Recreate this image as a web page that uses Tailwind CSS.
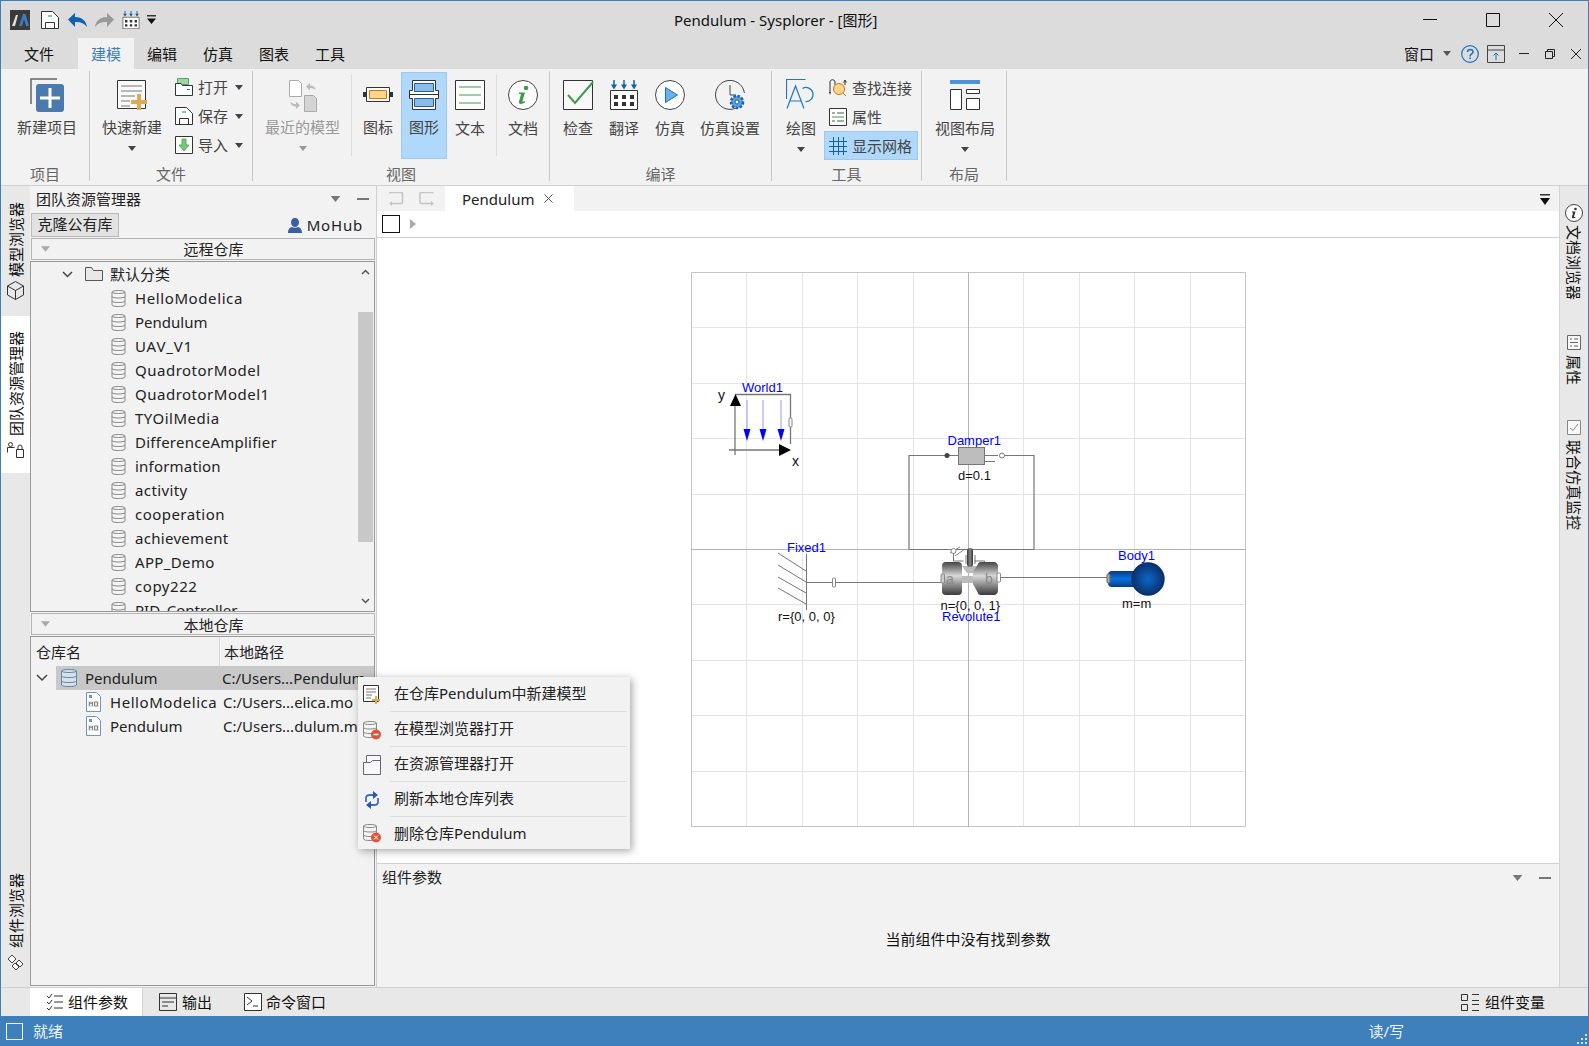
<!DOCTYPE html>
<html lang="zh">
<head>
  <meta charset="UTF-8" />
  <title>Pendulum - Sysplorer - [图形]</title>
  <script src="https://cdn.jsdelivr.net/npm/@tailwindcss/browser@4"></script>
</head>
<body class="w-[1589px] h-[1046px] overflow-hidden relative flex flex-col border-x border-t border-[#3d80bc] bg-[#f2f2f2] text-[15px] text-[#222] leading-[20px] font-['Noto_Sans','Noto_Sans_CJK_SC',sans-serif]">

  <!-- shared icons -->
  <svg class="absolute w-0 h-0">
    <symbol id="tri" viewBox="0 0 8 5"><path d="M0 0h8L4 5z" /></symbol>
    <symbol id="save" viewBox="0 0 18 18"><path d="M.5.500h11l6 6v11H.5z" fill="#fff" stroke="#333" /><path d="M7 5h4" stroke="#1a73c0" fill="none" /><path d="M4.500 17.500v-6h9v6" fill="none" stroke="#333" /></symbol>
    <symbol id="compile" viewBox="0 0 28 30"><path d="M.5 10.500h27v19H.5z" fill="#fff" stroke="#333" /><path d="M4 0v6M14 0v6M24 0v6" stroke="#0f62a8" stroke-width="1.500" /><path d="M1 4.500l3 5 3-5zM11 4.500l3 5 3-5zM21 4.500l3 5 3-5z" fill="#0f62a8" /><path d="M4 15h4v4H4zM12 15h4v4h-4zM20 15h4v4h-4zM4 22h4v4H4zM12 22h4v4h-4zM20 22h4v4h-4z" fill="#333" /></symbol>
    <symbol id="db" viewBox="0 0 14 19"><path d="M.5 3C.5 1 13.500 1 13.500 3v13c0 2-13 2-13 0z" fill="#f4f4f4" stroke="#888" /><path d="M.5 3c0 2 13 2 13 0M.5 7.500c0 2 13 2 13 0M.5 12c0 2 13 2 13 0" fill="none" stroke="#888" /></symbol>
    <symbol id="dbblue" viewBox="0 0 16 20"><path d="M.5 3C.5 1 15.500 1 15.500 3v14c0 2-15 2-15 0z" fill="#d8e0ea" stroke="#5f86ad" /><path d="M.5 3c0 2 15 2 15 0M.5 8c0 2 15 2 15 0M.5 13c0 2 15 2 15 0" fill="none" stroke="#5f86ad" /></symbol>
    <symbol id="mofile" viewBox="0 0 15 20"><path d="M.5.500h10l4 4v15H.5z" fill="#fff" stroke="#6f94c4" /><path d="M3 3h3v3H3z" fill="#6f94c4" /><path d="M2 9h11v6H2z" fill="#e4e4e4" /><path d="M3.500 14v-4l1.500 2 1.500-2v4M8.500 10h3v4h-3z" fill="none" stroke="#777" stroke-width=".8" /></symbol>
  </svg>

  <!-- title bar -->
  <div class="h-[37px] shrink-0 bg-[#dcdcdc] flex items-center">
    <svg class="ml-[9px] w-[20px] h-[20px]" viewBox="0 0 20 20"><rect width="20" height="20" fill="#3a3a3a" /><path d="M2 16 6 5h2L5 16z" fill="#ddd" /><path d="M9 16 13 4h2.500L19 16h-3l-2-7-2 7z" fill="#3d7cc0" /></svg>
    <svg class="ml-[11px] w-[18px] h-[18px]"><use href="#save" /></svg>
    <svg class="ml-[9px] w-[19px] h-[14px]" viewBox="0 0 19 14"><path d="M0 6.500 7 0v4c6 0 11 3 12 10-3-4-7-5.500-12-5v5z" fill="#0f62b0" /></svg>
    <svg class="ml-[8px] w-[19px] h-[14px]" viewBox="0 0 19 14"><path d="M19 6.500 12 0v4C6 4 1 7 0 14c3-4 7-5.500 12-5v5z" fill="#9a9a9a" /></svg>
    <svg class="ml-[8px] w-[18px] h-[18px]"><use href="#compile" /></svg>
    <svg class="ml-[7px] w-[9px] h-[9px]" viewBox="0 0 9 9"><path d="M0 0h9v1.500H0z" fill="#333" /><path d="M0 3.500h9L4.500 9z" fill="#111" /></svg>
    <span class="ml-[518px] text-[#111]">Pendulum - Sysplorer - [图形]</span>
    <div class="ml-auto flex items-center">
      <svg class="w-[14px] h-[14px]" viewBox="0 0 14 14"><path d="M0 6.500h14" stroke="#111" /></svg>
      <svg class="ml-[49px] w-[14px] h-[14px]" viewBox="0 0 14 14"><path d="M.5.500h13v13H.5z" fill="none" stroke="#111" /></svg>
      <svg class="ml-[49px] mr-[25px] w-[14px] h-[14px]" viewBox="0 0 14 14"><path d="M0 0l14 14M14 0 0 14" stroke="#111" /></svg>
    </div>
  </div>

  <!-- ribbon tabs -->
  <div class="h-[31px] shrink-0 bg-[#dcdcdc] flex items-stretch pl-[10px] text-[#111]">
    <div class="w-[56px] flex items-center justify-center">文件</div>
    <div class="ml-[11px] w-[56px] flex items-center justify-center bg-[#f2f2f2] text-[#3d80bc]">建模</div>
    <div class="w-[56px] flex items-center justify-center">编辑</div>
    <div class="w-[56px] flex items-center justify-center">仿真</div>
    <div class="w-[56px] flex items-center justify-center">图表</div>
    <div class="w-[56px] flex items-center justify-center">工具</div>
    <div class="ml-auto flex items-center">
      <span>窗口</span>
      <svg class="ml-[9px] w-[8px] h-[5px] fill-[#555]"><use href="#tri" /></svg>
      <svg class="ml-[10px] w-[18px] h-[18px]" viewBox="0 0 18 18"><circle cx="9" cy="9" r="8.300" fill="none" stroke="#1a73c0" stroke-width="1.200" /><path d="M6.500 7c0-3.500 5.500-3.500 5.500 0 0 2-3 2-3 4.500" fill="none" stroke="#1a73c0" stroke-width="1.500" /><path d="M8.200 12.500h1.600v1.600H8.200z" fill="#1a73c0" /></svg>
      <svg class="ml-[8px] w-[18px] h-[18px]" viewBox="0 0 18 18"><path d="M.5.500h17v17H.5zM.5 5h17" fill="none" stroke="#444" /><path d="M9 15V8M6.500 10.500 9 8l2.500 2.500" fill="none" stroke="#1a73c0" /></svg>
      <svg class="ml-[14px] w-[10px] h-[10px]" viewBox="0 0 10 10"><path d="M0 4.500h10" stroke="#222" /></svg>
      <svg class="ml-[16px] w-[10px] h-[10px]" viewBox="0 0 10 10"><path d="M.5 2.500h7v7h-7zM2.500 2.500v-2h7v7h-2" fill="none" stroke="#222" /></svg>
      <svg class="ml-[16px] mr-[7px] w-[10px] h-[10px]" viewBox="0 0 10 10"><path d="M0 0l10 10M10 0 0 10" stroke="#222" /></svg>
    </div>
  </div>

  <!-- ribbon -->
  <div class="h-[117px] shrink-0 flex border-b border-[#d0d0d0] text-[#444]">

    <div class="w-[89px] mt-[2px] h-[110px] border-r border-[#c8c8c8] flex flex-col">
      <div class="flex-1 flex pl-[16px]">
        <div class="w-[60px] flex flex-col items-center pt-[7px]">
          <svg class="w-[35px] h-[34px]" viewBox="0 0 35 34"><path d="M1 26V1h26" fill="none" stroke="#666" stroke-width="1.500" /><rect x="6" y="6" width="28" height="28" rx="3" fill="#4a7aae" /><path d="M10 18.500h20v3H10zM18.500 10h3v20h-3z" fill="#fff" /></svg>
          <span class="mt-[5px]">新建项目</span>
        </div>
      </div>
      <div class="h-[16px] leading-[16px] pt-[1px] text-center text-[#666]">项目</div>
    </div>

    <div class="w-[163px] mt-[2px] h-[110px] border-r border-[#c8c8c8] flex flex-col">
      <div class="flex-1 flex pl-[12px]">
        <div class="w-[60px] flex flex-col items-center pt-[9px]">
          <svg class="w-[31px] h-[30px]" viewBox="0 0 31 30"><path d="M.5.500h28v28H.5z" fill="#fafafa" stroke="#333" /><path d="M4 6h21M4 11h21M4 16h14M4 21h9M4 26h9" stroke="#777" /><path d="M20 14h4v6h6v4h-6v6h-4v-6h-6v-4h6z" fill="#e0aa55" /></svg>
          <span class="mt-[7px]">快速新建</span>
          <svg class="mt-[9px] w-[8px] h-[5px] fill-[#444]"><use href="#tri" /></svg>
        </div>
        <div class="ml-[13px] pt-[7px] flex flex-col gap-[11px]">
          <div class="h-[18px] flex items-center">
            <svg class="w-[18px] h-[18px]" viewBox="0 0 18 18"><path d="M2.500.500h11v6h-11z" fill="#9fd6a5" stroke="#5aa56a" /><path d="M.5 5.500H6l1.500 2h10v10H.5z" fill="#fff" stroke="#333" /><path d="M12 11.500h3" stroke="#1a73c0" /></svg>
            <span class="ml-[5px]">打开</span>
            <svg class="ml-[7px] w-[8px] h-[5px] fill-[#444]"><use href="#tri" /></svg>
          </div>
          <div class="h-[18px] flex items-center">
            <svg class="w-[18px] h-[18px]"><use href="#save" /></svg>
            <span class="ml-[5px]">保存</span>
            <svg class="ml-[7px] w-[8px] h-[5px] fill-[#444]"><use href="#tri" /></svg>
          </div>
          <div class="h-[18px] flex items-center">
            <svg class="w-[18px] h-[18px]" viewBox="0 0 18 18"><path d="M.5.500h17v17H.5z" fill="#fff" stroke="#333" /><path d="M7 3h4v6h3l-5 6-5-6h3z" fill="#7ac77f" stroke="#3f9a4c" stroke-width=".8" /></svg>
            <span class="ml-[5px]">导入</span>
            <svg class="ml-[7px] w-[8px] h-[5px] fill-[#444]"><use href="#tri" /></svg>
          </div>
        </div>
      </div>
      <div class="h-[16px] leading-[16px] pt-[1px] text-center text-[#666]">文件</div>
    </div>

    <div class="w-[297px] mt-[2px] h-[110px] border-r border-[#c8c8c8] flex flex-col">
      <div class="flex-1 flex pl-[12px]">
        <div class="w-[75px] flex flex-col items-center pt-[9px] text-[#999]">
          <svg class="w-[28px] h-[32px]" viewBox="0 0 28 32"><path d="M.5.500h9l3 3v13H.5z" fill="#fff" stroke="#aaa" /><path d="M15.500 15.500h9l3 3v13h-12z" fill="#d4d4d4" stroke="#aaa" /><path d="M17 6.500 21 3v2.500c3 0 5 1.500 6 4.500-2-1.500-4-2-6-2v2.500zM11 25.500 7 29v-2.500c-3 0-5-1.500-6-4.500 2 1.500 4 2 6 2v-2.500z" fill="#bbb" /></svg>
          <span class="mt-[5px]">最近的模型</span>
          <svg class="mt-[9px] w-[8px] h-[5px] fill-[#999]"><use href="#tri" /></svg>
        </div>
        <div class="ml-[11px] mt-[4px] w-[1px] h-[81px] bg-[#dcdcdc]"></div>
        <div class="ml-[11px] w-[30px] flex flex-col items-center pt-[16px]">
          <svg class="w-[30px] h-[15px]" viewBox="0 0 30 15"><path d="M3.500.500h23v14h-23z" fill="#fff" stroke="#333" /><path d="M0 5h3v5H0zM27 5h3v5h-3z" fill="#333" /><path d="M6.500 3.500h17v8h-17z" fill="#fbd68c" stroke="#d9730d" /></svg>
          <span class="mt-[15px]">图标</span>
        </div>
        <div class="ml-[8px] mt-[1px] w-[46px] h-[87px] bg-[#afd8fa] border border-[#9fc9ec] flex flex-col items-center pt-[7px]">
          <svg class="w-[30px] h-[30px]" viewBox="0 0 30 30"><path d="M3.500.500h23v10h3v8h-3v11h-23v-11h-3v-8h3z" fill="#fff" stroke="#333" /><path d="M.5 14.500h29" stroke="#333" /><path d="M5.500 3.500h19v8h-19zM5.500 18.500h19v8h-19z" fill="#8bbde8" stroke="#1a63a8" /></svg>
          <span class="mt-[7px]">图形</span>
        </div>
        <div class="ml-[8px] w-[30px] flex flex-col items-center pt-[9px]">
          <svg class="w-[30px] h-[30px]" viewBox="0 0 30 30"><path d="M.5.500h29v29H.5z" fill="#fff" stroke="#333" /><path d="M4 7h22M4 15h22M4 23h22" stroke="#3f9a4c" /></svg>
          <span class="mt-[8px]">文本</span>
        </div>
        <div class="ml-[11px] mt-[4px] w-[1px] h-[81px] bg-[#dcdcdc]"></div>
        <div class="ml-[11px] w-[30px] flex flex-col items-center pt-[9px]">
          <svg class="w-[30px] h-[30px]" viewBox="0 0 30 30"><circle cx="15" cy="15" r="14.500" fill="#fff" stroke="#444" /><circle cx="18" cy="8" r="2.300" fill="#3f9a4c" /><path d="M11 12.500h6L14.500 21c-.3 1 1 1 2.500 0v1.500c-3 2-7 2-6-1l2-7.500h-2z" fill="#3f9a4c" /></svg>
          <span class="mt-[8px]">文档</span>
        </div>
      </div>
      <div class="h-[16px] leading-[16px] pt-[1px] text-center text-[#666]">视图</div>
    </div>

    <div class="w-[222px] mt-[2px] h-[110px] border-r border-[#c8c8c8] flex flex-col">
      <div class="flex-1 flex pl-[13px]">
        <div class="w-[30px] flex flex-col items-center pt-[9px]">
          <svg class="w-[31px] h-[30px] shrink-0" viewBox="0 0 31 30"><path d="M.5.500h29v29H.5z" fill="#f8f8f8" stroke="#333" /><path d="M5 15l7 8L30 2" fill="none" stroke="#3f9a4c" stroke-width="2" /></svg>
          <span class="mt-[8px]">检查</span>
        </div>
        <div class="ml-[16px] w-[30px] flex flex-col items-center pt-[9px]">
          <svg class="w-[28px] h-[30px]"><use href="#compile" /></svg>
          <span class="mt-[8px]">翻译</span>
        </div>
        <div class="ml-[16px] w-[30px] flex flex-col items-center pt-[9px]">
          <svg class="w-[30px] h-[30px]" viewBox="0 0 30 30"><circle cx="15" cy="15" r="14.500" fill="#fff" stroke="#444" /><path d="M10.500 7.500 22.500 15l-12 7.500z" fill="#6db0ea" stroke="#1a73c0" /></svg>
          <span class="mt-[8px]">仿真</span>
        </div>
        <div class="ml-[15px] w-[60px] flex flex-col items-center pt-[9px]">
          <svg class="w-[30px] h-[30px]" viewBox="0 0 30 30"><path d="M23 27A14.500 14.500 0 1 1 29.400 13" fill="none" stroke="#444" /><path d="M15 5v10h6" fill="none" stroke="#444" /><circle cx="22" cy="22" r="6" fill="#5b9fdc" stroke="#1a63a8" stroke-width="2.500" stroke-dasharray="2.500 1.500" /><circle cx="22" cy="22" r="2" fill="#fff" stroke="#1a63a8" /></svg>
          <span class="mt-[8px]">仿真设置</span>
        </div>
      </div>
      <div class="h-[16px] leading-[16px] pt-[1px] text-center text-[#666]">编译</div>
    </div>

    <div class="w-[150px] mt-[2px] h-[110px] border-r border-[#c8c8c8] flex flex-col">
      <div class="flex-1 flex pl-[14px]">
        <div class="w-[30px] flex flex-col items-center pt-[8px]">
          <svg class="w-[30px] h-[30px] shrink-0" viewBox="0 0 30 30"><path d="M.5 20V.500h19M1 29.500 9.500 7l8.500 22.500M4 22h11" fill="none" stroke="#1f78bd" stroke-width="1.200" /><path d="M16.500 9.500a7 7 0 1 1 3 13" fill="none" stroke="#1f78bd" stroke-width="1.200" /></svg>
          <span class="mt-[9px]">绘图</span>
          <svg class="mt-[9px] w-[8px] h-[5px] fill-[#444]"><use href="#tri" /></svg>
        </div>
        <div class="ml-[8px] mt-[2px] w-[94px] flex flex-col">
          <div class="h-[29px] pl-[5px] flex items-center">
            <svg class="w-[19px] h-[18px] shrink-0" viewBox="0 0 19 18"><path d="M1 14V3c0-3 5-3 5 0v3" fill="none" stroke="#333" /><path d="M0 13h2l-1 3z" fill="#333" /><circle cx="10" cy="10" r="5.500" fill="#fbd68c" stroke="#d9730d" /><path d="M14 14l3 3" stroke="#d9730d" /><path d="M16 6V2M14.500 3.500 16 1l1.500 2.500" fill="none" stroke="#333" /></svg>
            <span class="ml-[4px] pt-[1px] whitespace-nowrap">查找连接</span>
          </div>
          <div class="h-[29px] pl-[5px] flex items-center">
            <svg class="w-[18px] h-[18px] shrink-0" viewBox="0 0 18 18"><path d="M.5.500h17v17H.5z" fill="#fff" stroke="#333" /><path d="M3 5h3M8 5h7M3 13h3M8 13h7" stroke="#555" /><path d="M3 9h12" stroke="#3f9a4c" /></svg>
            <span class="ml-[5px] pt-[1px]">属性</span>
          </div>
          <div class="h-[29px] pl-[4px] flex items-center bg-[#afd8fa] border border-[#9fc9ec]">
            <svg class="w-[18px] h-[18px] shrink-0" viewBox="0 0 18 18"><path d="M4.500 0v18M9.500 0v18M14.500 0v18M0 4.500h18M0 9.500h18M0 14.500h18" stroke="#0f62a8" /></svg>
            <span class="ml-[5px] whitespace-nowrap">显示网格</span>
          </div>
        </div>
      </div>
      <div class="h-[16px] leading-[16px] pt-[1px] text-center text-[#666]">工具</div>
    </div>

    <div class="w-[85px] mt-[2px] h-[110px] border-r border-[#c8c8c8] flex flex-col">
      <div class="flex-1 flex pl-[13px]">
        <div class="w-[60px] flex flex-col items-center pt-[9px]">
          <svg class="w-[30px] h-[30px]" viewBox="0 0 30 30"><path d="M0 0h30v4H0z" fill="#4b94d6" /><path d="M.5 9.500h11v20H.5zM16.500 9.500h13v4h-13zM16.500 18.500h13v11h-13z" fill="#fff" stroke="#333" /></svg>
          <span class="mt-[8px]">视图布局</span>
          <svg class="mt-[9px] w-[8px] h-[5px] fill-[#444]"><use href="#tri" /></svg>
        </div>
      </div>
      <div class="h-[16px] leading-[16px] pt-[1px] text-center text-[#666]">布局</div>
    </div>
  </div>

  <!-- main row -->
  <div class="flex flex-1 min-h-0">

    <!-- left rail -->
    <div class="w-[29px] shrink-0 bg-[#e8e8e8] flex flex-col text-[#111]">
      <div class="h-[130px] pt-[16px] flex flex-col items-center">
        <span class="[writing-mode:vertical-rl] [text-orientation:sideways] rotate-180">模型浏览器</span>
        <svg class="mt-[4px] w-[17px] h-[19px]" viewBox="0 0 17 19"><path d="M8.500.500l8 4.500v9l-8 4.500-8-4.500V5zM.5 5l8 4.500L16.500 5M8.500 9.500v9" fill="none" stroke="#333" /></svg>
      </div>
      <div class="h-[157px] pt-[15px] bg-white flex flex-col items-center">
        <span class="[writing-mode:vertical-rl] [text-orientation:sideways] rotate-180">团队资源管理器</span>
        <svg class="mt-[6px] w-[17px] h-[16px]" viewBox="0 0 17 16"><path d="M7.500 5.500h-7v5M1.500 2.500a2 2 0 1 1 4 0 2 2 0 1 1-4 0" fill="none" stroke="#333" /><path d="M9.500 7.500h7v8h-7zM11 7.500V5a2 2 0 0 1 4 0v2.500" fill="none" stroke="#333" /></svg>
      </div>
      <div class="mt-auto pb-[16px] flex flex-col items-center">
        <span class="[writing-mode:vertical-rl] [text-orientation:sideways] rotate-180">组件浏览器</span>
        <svg class="mt-[6px] w-[17px] h-[17px]" viewBox="0 0 17 17"><path d="M1 5l4-4 4 4-4 4zM9 9l3-3 4 4-3 3zM5 12l3-3 4 4-3 3z" fill="#fff" stroke="#444" /></svg>
      </div>
    </div>

    <!-- team resource panel -->
    <div class="w-[347px] shrink-0 flex flex-col border-r border-[#cfcfcf]">
      <div class="h-[26px] shrink-0 pl-[6px] pr-[7px] flex items-center text-[#222]">
        <span>团队资源管理器</span>
        <svg class="ml-auto w-[11px] h-[6px] fill-[#777]"><use href="#tri" /></svg>
        <span class="ml-[16px] w-[12px] h-[2px] bg-[#777]"></span>
      </div>
      <div class="h-[24px] mt-[1px] shrink-0 pl-[1px] pr-[13px] flex items-center">
        <div class="w-[88px] h-[24px] pb-[2px] bg-[#e2e2e2] border border-[#bbb] flex items-center justify-center whitespace-nowrap">克隆公有库</div>
        <svg class="ml-auto w-[14px] h-[15px]" viewBox="0 0 14 15"><path d="M7 0c2.500 0 4 2 4 4.500S9 9 7 9 3 7 3 4.500 4.500 0 7 0zM0 15c0-4 2-5.500 4-6 1.500 1 4.500 1 6 0 2 .5 4 2 4 6z" fill="#3a5da8" /></svg>
        <span class="ml-[5px] text-[#222] tracking-[0.8px]">MoHub</span>
      </div>
      <div class="h-[22px] mt-[1px] shrink-0 ml-[1px] w-[344px] border border-[#b4b4b4] flex items-center">
        <svg class="ml-[9px] w-[9px] h-[6px] fill-[#aaa] shrink-0"><use href="#tri" /></svg>
        <span class="flex-1 text-center pl-[3px]">远程仓库</span>
      </div>

      <div class="h-[351px] mt-[1px] shrink-0 w-[345px] border border-[#999] flex overflow-hidden">
        <div class="flex-1 overflow-hidden text-[#222]">
          <div class="h-[24px] pl-[31px] flex items-center">
            <svg class="w-[11px] h-[7px]" viewBox="0 0 11 7"><path d="M1 1l4.500 4.500L10 1" fill="none" stroke="#444" stroke-width="1.500" /></svg>
            <svg class="ml-[12px] w-[18px] h-[14px]" viewBox="0 0 18 14"><path d="M.5 13.500V.500h6l2 3h9v10z" fill="#e8e8e8" stroke="#555" /></svg>
            <span class="ml-[7px]">默认分类</span>
          </div>
          <div class="h-[24px] pl-[80px] flex items-center"><svg class="w-[15px] h-[19px] shrink-0"><use href="#db" /></svg><span class="ml-[9px] tracking-[0.6px]">HelloModelica</span></div>
          <div class="h-[24px] pl-[80px] flex items-center"><svg class="w-[15px] h-[19px] shrink-0"><use href="#db" /></svg><span class="ml-[9px]">Pendulum</span></div>
          <div class="h-[24px] pl-[80px] flex items-center"><svg class="w-[15px] h-[19px] shrink-0"><use href="#db" /></svg><span class="ml-[9px] tracking-[0.8px]">UAV_V1</span></div>
          <div class="h-[24px] pl-[80px] flex items-center"><svg class="w-[15px] h-[19px] shrink-0"><use href="#db" /></svg><span class="ml-[9px] tracking-[0.5px]">QuadrotorModel</span></div>
          <div class="h-[24px] pl-[80px] flex items-center"><svg class="w-[15px] h-[19px] shrink-0"><use href="#db" /></svg><span class="ml-[9px] tracking-[0.5px]">QuadrotorModel1</span></div>
          <div class="h-[24px] pl-[80px] flex items-center"><svg class="w-[15px] h-[19px] shrink-0"><use href="#db" /></svg><span class="ml-[9px] tracking-[0.5px]">TYOilMedia</span></div>
          <div class="h-[24px] pl-[80px] flex items-center"><svg class="w-[15px] h-[19px] shrink-0"><use href="#db" /></svg><span class="ml-[9px] tracking-[0.25px]">DifferenceAmplifier</span></div>
          <div class="h-[24px] pl-[80px] flex items-center"><svg class="w-[15px] h-[19px] shrink-0"><use href="#db" /></svg><span class="ml-[9px] tracking-[0.2px]">information</span></div>
          <div class="h-[24px] pl-[80px] flex items-center"><svg class="w-[15px] h-[19px] shrink-0"><use href="#db" /></svg><span class="ml-[9px] tracking-[0.4px]">activity</span></div>
          <div class="h-[24px] pl-[80px] flex items-center"><svg class="w-[15px] h-[19px] shrink-0"><use href="#db" /></svg><span class="ml-[9px] tracking-[0.45px]">cooperation</span></div>
          <div class="h-[24px] pl-[80px] flex items-center"><svg class="w-[15px] h-[19px] shrink-0"><use href="#db" /></svg><span class="ml-[9px] tracking-[0.3px]">achievement</span></div>
          <div class="h-[24px] pl-[80px] flex items-center"><svg class="w-[15px] h-[19px] shrink-0"><use href="#db" /></svg><span class="ml-[9px] tracking-[0.35px]">APP_Demo</span></div>
          <div class="h-[24px] pl-[80px] flex items-center"><svg class="w-[15px] h-[19px] shrink-0"><use href="#db" /></svg><span class="ml-[9px] tracking-[0.55px]">copy222</span></div>
          <div class="h-[24px] pl-[80px] flex items-center"><svg class="w-[15px] h-[19px] shrink-0"><use href="#db" /></svg><span class="ml-[9px]">PID_Controller</span></div>
        </div>
        <div class="w-[17px] shrink-0 flex flex-col items-center">
          <svg class="mt-[7px] w-[9px] h-[6px]" viewBox="0 0 9 6"><path d="M1 5l3.500-3.500L8 5" fill="none" stroke="#555" stroke-width="1.500" /></svg>
          <div class="mt-[37px] w-[15px] h-[230px] bg-[#c8c8c8]"></div>
          <svg class="mt-auto mb-[7px] w-[9px] h-[6px]" viewBox="0 0 9 6"><path d="M1 1l3.500 3.500L8 1" fill="none" stroke="#555" stroke-width="1.500" /></svg>
        </div>
      </div>

      <div class="h-[22px] mt-[1px] shrink-0 ml-[1px] w-[344px] border border-[#b4b4b4] flex items-center">
        <svg class="ml-[9px] w-[9px] h-[6px] fill-[#aaa] shrink-0"><use href="#tri" /></svg>
        <span class="flex-1 text-center pl-[3px] pt-[1px]">本地仓库</span>
      </div>

      <div class="flex-1 mt-[1px] mb-[1px] w-[345px] border border-[#999] flex flex-col text-[#222] overflow-hidden">
        <div class="h-[29px] shrink-0 flex items-center">
          <div class="w-[189px] pl-[5px] border-r border-[#d8d8d8] h-full flex items-center">仓库名</div>
          <div class="pl-[4px]">本地路径</div>
        </div>
        <div class="h-[24px] shrink-0 flex items-center">
          <div class="w-[25px] pl-[5px] shrink-0"><svg class="w-[12px] h-[8px]" viewBox="0 0 12 8"><path d="M1 1l5 5 5-5" fill="none" stroke="#444" stroke-width="1.500" /></svg></div>
          <div class="flex-1 h-full bg-[#c8c8c8] flex items-center min-w-0">
            <svg class="ml-[5px] w-[16px] h-[20px] shrink-0"><use href="#dbblue" /></svg>
            <span class="ml-[8px] w-[137px] shrink-0">Pendulum</span>
            <span class="whitespace-nowrap">C:/Users...Pendulum</span>
          </div>
        </div>
        <div class="h-[24px] shrink-0 flex items-center pl-[55px]">
          <svg class="w-[15px] h-[20px] shrink-0"><use href="#mofile" /></svg>
          <span class="ml-[9px] w-[113px] shrink-0 whitespace-nowrap overflow-hidden tracking-[0.55px]">HelloModelica</span>
          <span class="whitespace-nowrap">C:/Users...elica.mo</span>
        </div>
        <div class="h-[24px] shrink-0 flex items-center pl-[55px]">
          <svg class="w-[15px] h-[20px] shrink-0"><use href="#mofile" /></svg>
          <span class="ml-[9px] w-[113px] shrink-0">Pendulum</span>
          <span class="whitespace-nowrap">C:/Users...dulum.mo</span>
        </div>
      </div>
    </div>

    <!-- editor -->
    <div class="flex-1 min-w-0 flex flex-col">
      <div class="h-[25px] shrink-0 bg-[#f2f2f2] flex items-stretch">
        <svg class="ml-[12px] mt-[6px] w-[15px] h-[14px]" viewBox="0 0 15 14"><path d="M.5 1.500a1 1 0 0 1 1-1h11a1 1 0 0 1 1 1v9a1 1 0 0 1-1 1H2" fill="none" stroke="#c4c4c4" stroke-width="1.500" /><path d="M0 11.500 3 9v5z" fill="#c4c4c4" /></svg>
        <svg class="ml-[15px] mt-[6px] w-[15px] h-[14px]" viewBox="0 0 15 14"><path d="M14 1.500a1 1 0 0 0-1-1H2a1 1 0 0 0-1 1v9a1 1 0 0 0 1 1h11" fill="none" stroke="#c4c4c4" stroke-width="1.500" /><path d="M15 11.500 12 9v5z" fill="#c4c4c4" /></svg>
        <div class="ml-[11px] w-[129px] bg-white flex items-center pl-[17px] text-[#222]">
          <span>Pendulum</span>
          <svg class="ml-[10px] w-[9px] h-[9px]" viewBox="0 0 9 9"><path d="M.5.500l8 8M8.500.500l-8 8" stroke="#555" /></svg>
        </div>
        <svg class="ml-auto mr-[9px] mt-[8px] w-[10px] h-[11px]" viewBox="0 0 10 11"><path d="M0 0h10v1.500H0z" fill="#333" /><path d="M0 4h10l-5 7z" fill="#111" /></svg>
      </div>
      <div class="h-[27px] shrink-0 bg-white border-b border-[#cfcfcf] flex items-center pl-[5px]">
        <span class="w-[18px] h-[18px] border border-[#111] bg-white"></span>
        <svg class="ml-[10px] w-[6px] h-[10px]" viewBox="0 0 6 10"><path d="M0 0l6 5-6 5z" fill="#aaa" /></svg>
      </div>

      <!-- diagram canvas -->
      <div class="flex-1 min-h-0 bg-white flex justify-center items-start pt-[34px]">
        <svg class="w-[556px] h-[556px] font-['Liberation_Sans'] text-[13px]" viewBox="690 272 556 556">
          <defs>
            <linearGradient id="cyl" x1="0" y1="0" x2="0" y2="1"><stop offset="0" stop-color="#444" /><stop offset=".42" stop-color="#d8d8d8" /><stop offset=".65" stop-color="#999" /><stop offset="1" stop-color="#3a3a3a" /></linearGradient>
            <linearGradient id="blue" x1="0" y1="0" x2="0" y2="1"><stop offset="0" stop-color="#0a3a80" /><stop offset=".5" stop-color="#0a72e4" /><stop offset="1" stop-color="#0a3a80" /></linearGradient>
            <radialGradient id="ball"><stop offset="0" stop-color="#0b66c8" /><stop offset="1" stop-color="#0a2f68" /></radialGradient>
            <linearGradient id="rod" x1="0" y1="0" x2="1" y2="0"><stop offset="0" stop-color="#333" /><stop offset=".5" stop-color="#888" /><stop offset="1" stop-color="#333" /></linearGradient>
          </defs>
          <!-- grid -->
          <path d="M746.500 272v555M802.500 272v555M857.500 272v555M913.500 272v555M1023.500 272v555M1079.500 272v555M1134.500 272v555M1190.500 272v555M691 327.500h555M691 383.500h555M691 438.500h555M691 494.500h555M691 604.500h555M691 660.500h555M691 715.500h555M691 771.500h555" stroke="#e4e4e4" fill="none" />
          <path d="M691.500 272.500h554v554h-554z" stroke="#c4c4c4" fill="none" />
          <path d="M968.500 272v555M691 549.500h555" stroke="#b4b4b4" fill="none" />

          <!-- connections -->
          <path d="M947 455.500h-38v94h125v-94h-32" fill="none" stroke="#777" stroke-width="1.200" />
          <path d="M806 582.500h26M836 582.500h107M1000 577.500h107" fill="none" stroke="#777" stroke-width="1.200" />

          <!-- World1 -->
          <text x="742" y="392" class="fill-[#0000ff]">World1</text>
          <text x="718" y="400" class="fill-[#111] text-[14px]">y</text>
          <text x="792" y="466" class="fill-[#111] text-[14px]">x</text>
          <path d="M735 402v53M729 450h52M735 394.500h55.500V444" fill="none" stroke="#777" stroke-width="1.300" />
          <path d="M735.500 394 741 406h-11zM791 450l-12-6v12z" fill="#000" />
          <rect x="789" y="418" width="3" height="9" rx="1" fill="#fff" stroke="#888" />
          <path d="M747 400v30M763 400v30M781 400v30" stroke="#9999ff" />
          <path d="M743.500 429h7l-3.500 12zM759.500 429h7l-3.500 12zM777.500 429h7l-3.500 12z" fill="#0000ff" />

          <!-- Damper1 -->
          <text x="947.500" y="445" class="fill-[#0000ff]">Damper1</text>
          <path d="M947 455.500h51M984 461.500h11" stroke="#777" />
          <rect x="958.500" y="447.500" width="26" height="17" fill="#bdbdbd" stroke="#777" />
          <circle cx="947" cy="455.500" r="2.500" fill="#444" />
          <circle cx="1002" cy="455.500" r="2.500" fill="#fff" stroke="#777" />
          <text x="958" y="480" class="fill-[#111]">d=0.1</text>

          <!-- Fixed1 -->
          <text x="787" y="552" class="fill-[#0000ff]">Fixed1</text>
          <path d="M806.500 554v56M778 553l28 18M778 565l28 17M778 577l28 16M778 588l28 16" fill="none" stroke="#777" />
          <rect x="832.500" y="578" width="3" height="9" rx="1" fill="#fff" stroke="#888" />
          <text x="778" y="621" class="fill-[#111]">r={0, 0, 0}</text>

          <!-- Revolute1 -->
          <path d="M950 553l10-6M955 556l10-7" stroke="#888" />
          <circle cx="953.500" cy="551" r="2.500" fill="#fff" stroke="#888" />
          <path d="M953.500 553v8h10M974.500 561h10v4M966 555v9M975 555v9" fill="none" stroke="#777" />
          <path d="M962 566h16l-5 7h-6z" fill="#bbb" />
          <rect x="962" y="576" width="16" height="7" fill="#bbb" />
          <rect x="942" y="562" width="20" height="33" rx="4" fill="url(#cyl)" />
          <path d="M978 564c0-1 1-2 3-2h13c2 0 4 2 4 4v25c0 2-2 4-4 4h-13c-2 0-3-1-3-2l-5-9v-12z" fill="url(#cyl)" />
          <rect x="967" y="548" width="6" height="19" rx="3" fill="url(#rod)" />
          <text x="946" y="584" class="fill-[#888] text-[14px]">a</text>
          <text x="985" y="584" class="fill-[#888] text-[14px]">b</text>
          <rect x="941" y="574" width="3.500" height="9" rx="1" fill="#ccc" stroke="#888" />
          <rect x="997" y="573" width="3.500" height="9" rx="1" fill="#fff" stroke="#888" />
          <text x="940.500" y="610" class="fill-[#111]">n={0, 0, 1}</text>
          <text x="942" y="621" class="fill-[#0000ff]">Revolute1</text>

          <!-- Body1 -->
          <text x="1118" y="560" class="fill-[#0000ff]">Body1</text>
          <rect x="1108" y="571" width="30" height="16" rx="4" fill="url(#blue)" />
          <circle cx="1148" cy="579" r="16.700" fill="url(#ball)" />
          <rect x="1107" y="574" width="3" height="9" rx="1" fill="#aaa" stroke="#666" />
          <text x="1122" y="608" class="fill-[#111]">m=m</text>
        </svg>
      </div>

      <!-- parameters panel -->
      <div class="h-[124px] shrink-0 bg-[#f2f2f2] border-t border-[#d0d0d0] flex flex-col">
        <div class="h-[28px] shrink-0 pl-[5px] pr-[8px] pb-[3px] flex items-center text-[#222]">
          <span>组件参数</span>
          <svg class="ml-auto mt-[3px] w-[11px] h-[6px] fill-[#777]"><use href="#tri" /></svg>
          <span class="ml-[16px] mt-[3px] w-[12px] h-[2px] bg-[#777]"></span>
        </div>
        <div class="flex-1 flex items-center justify-center pb-[2px] text-[#111]">当前组件中没有找到参数</div>
      </div>
    </div>

    <!-- right rail -->
    <div class="w-[29px] shrink-0 bg-[#e8e8e8] border-l border-[#d4d4d4] flex flex-col items-center text-[#111]">
      <svg class="mt-[18px] w-[18px] h-[18px]" viewBox="0 0 18 18"><circle cx="9" cy="9" r="8.500" fill="#fff" stroke="#444" /><circle cx="10.500" cy="5" r="1.300" fill="#333" /><path d="M7 7.500h3.500L9 12.500c-.2.700.5.700 1.500 0v1c-2 1.200-4 1.200-3.500-.7l1-4.300H7z" fill="#333" /></svg>
      <span class="mt-[3px] [writing-mode:vertical-rl] [text-orientation:sideways]">文档浏览器</span>
      <svg class="mt-[35px] w-[14px] h-[15px]" viewBox="0 0 14 15"><path d="M.5.500h13v14H.5zM3 4h2M7 4h4M3 7.500h8M3 11h2M7 11h4" fill="#f8f8f8" stroke="#666" /></svg>
      <span class="mt-[5px] [writing-mode:vertical-rl] [text-orientation:sideways]">属性</span>
      <svg class="mt-[35px] w-[14px] h-[15px]" viewBox="0 0 14 15"><path d="M.5.500h13v14H.5z" fill="#f8f8f8" stroke="#888" /><path d="M3 8l3 2.500L11 4" fill="none" stroke="#888" /></svg>
      <span class="mt-[5px] [writing-mode:vertical-rl] [text-orientation:sideways]">联合仿真监控</span>
    </div>
  </div>

  <!-- bottom tabs -->
  <div class="h-[29px] shrink-0 bg-[#e8e8e8] border-t border-[#d0d0d0] flex items-stretch text-[#111]">
    <div class="ml-[29px] w-[113px] bg-white border-r border-[#d4d4d4] flex items-center pl-[16px]">
      <svg class="w-[17px] h-[18px]" viewBox="0 0 17 18"><path d="M1 3l2 2 3-4M1 9l2 2 3-4M1 15l2 2 3-4" fill="none" stroke="#333" /><path d="M8 3h9M8 9h9M8 15h9" stroke="#333" /></svg>
      <span class="ml-[5px]">组件参数</span>
    </div>
    <div class="ml-[16px] flex items-center">
      <svg class="w-[18px] h-[18px]" viewBox="0 0 18 18"><path d="M.5.500h17v17H.5zM.5 5h17M3 9h12M3 13h6" fill="none" stroke="#333" /></svg>
      <span class="ml-[5px]">输出</span>
    </div>
    <div class="ml-[32px] flex items-center">
      <svg class="w-[18px] h-[18px]" viewBox="0 0 18 18"><path d="M.5.500h17v17H.5z" fill="#fff" stroke="#333" /><path d="M3 4l5 4-5 4M9 13h5" fill="none" stroke="#333" /></svg>
      <span class="ml-[4px]">命令窗口</span>
    </div>
    <div class="ml-auto mr-[43px] flex items-center">
      <svg class="w-[18px] h-[18px]" viewBox="0 0 18 18"><path d="M.5 1.500h6v6h-6zM.5 11.500h6v6h-6zM11 1.500h7M11 7.500h7M11 11.500h7M11 17.500h7" fill="none" stroke="#333" /></svg>
      <span class="ml-[6px]">组件变量</span>
    </div>
  </div>

  <!-- status bar -->
  <div class="h-[30px] shrink-0 bg-[#3d80bc] flex items-center text-[#eef4fa]">
    <span class="ml-[5px] w-[17px] h-[17px] border border-white/90"></span>
    <span class="ml-[10px]">就绪</span>
    <span class="ml-auto">读/写</span>
    <svg class="ml-[173px] mr-[1px] self-end mb-[2px] w-[10px] h-[10px] fill-white/80" viewBox="0 0 10 10"><path d="M8 0h2v2H8zM4 4h2v2H4zM8 4h2v2H8zM0 8h2v2H0zM4 8h2v2H4zM8 8h2v2H8z" /></svg>
  </div>

  <!-- context menu -->
  <div class="absolute left-[357px] top-[676px] w-[272px] bg-[#f2f2f2] shadow-[2px_2px_8px_rgba(0,0,0,0.35)] text-[#222] flex flex-col">
    <div class="h-[35px] flex">
      <div class="w-[32px] pl-[5px] flex items-center"><svg class="w-[18px] h-[20px]" viewBox="0 0 18 20"><path d="M.5.500h15v16H.5z" fill="#fff" stroke="#333" /><path d="M3 4h10M3 7h10M3 10h6M3 13h5" stroke="#777" /><path d="M12 11h2v3h3v2h-3v3h-2v-3H9v-2h3z" fill="#e0aa55" /></svg></div>
      <div class="flex-1 mr-[3px] pl-[4px] pb-[2px] border-b border-[#dcdcdc] flex items-center">在仓库Pendulum中新建模型</div>
    </div>
    <div class="h-[35px] flex">
      <div class="w-[32px] pl-[5px] flex items-center"><svg class="w-[18px] h-[20px]" viewBox="0 0 18 20"><use href="#db" width="14" height="19" /><circle cx="13" cy="14.500" r="5" fill="#d9553f" /><path d="M10.500 14.500h5" stroke="#fff" stroke-width="1.500" /></svg></div>
      <div class="flex-1 mr-[3px] pl-[4px] pb-[2px] border-b border-[#dcdcdc] flex items-center">在模型浏览器打开</div>
    </div>
    <div class="h-[35px] flex">
      <div class="w-[32px] pl-[5px] flex items-center"><svg class="w-[18px] h-[20px]" viewBox="0 0 18 20"><path d="M.5 19.500V7.500h3V.500h14v19z" fill="#f8f8f8" stroke="#667" /><path d="M.5 7.500h7l2-2h8" fill="none" stroke="#667" /></svg></div>
      <div class="flex-1 mr-[3px] pl-[4px] pb-[2px] border-b border-[#dcdcdc] flex items-center">在资源管理器打开</div>
    </div>
    <div class="h-[35px] flex">
      <div class="w-[32px] pl-[5px] flex items-center"><svg class="w-[18px] h-[20px]" viewBox="0 0 18 20"><path d="M3 12V8c0-2 2-3 4-3h4" fill="none" stroke="#3f6fc0" stroke-width="1.800" /><path d="M10 1l5 4-5 4z" fill="#2b57a8" /><path d="M15 8v4c0 2-2 3-4 3H7" fill="none" stroke="#3f6fc0" stroke-width="1.800" /><path d="M8 11l-5 4 5 4z" fill="#2b57a8" /></svg></div>
      <div class="flex-1 mr-[3px] pl-[4px] pb-[2px] border-b border-[#dcdcdc] flex items-center">刷新本地仓库列表</div>
    </div>
    <div class="h-[32px] flex">
      <div class="w-[32px] pl-[5px] flex items-center"><svg class="w-[18px] h-[20px]" viewBox="0 0 18 20"><use href="#db" width="14" height="19" /><circle cx="13" cy="14.500" r="5" fill="#d9553f" /><path d="M11 12.500l4 4M15 12.500l-4 4" stroke="#fff" /></svg></div>
      <div class="flex-1 mr-[3px] pl-[4px] flex items-center">删除仓库Pendulum</div>
    </div>
  </div>
</body>
</html>
